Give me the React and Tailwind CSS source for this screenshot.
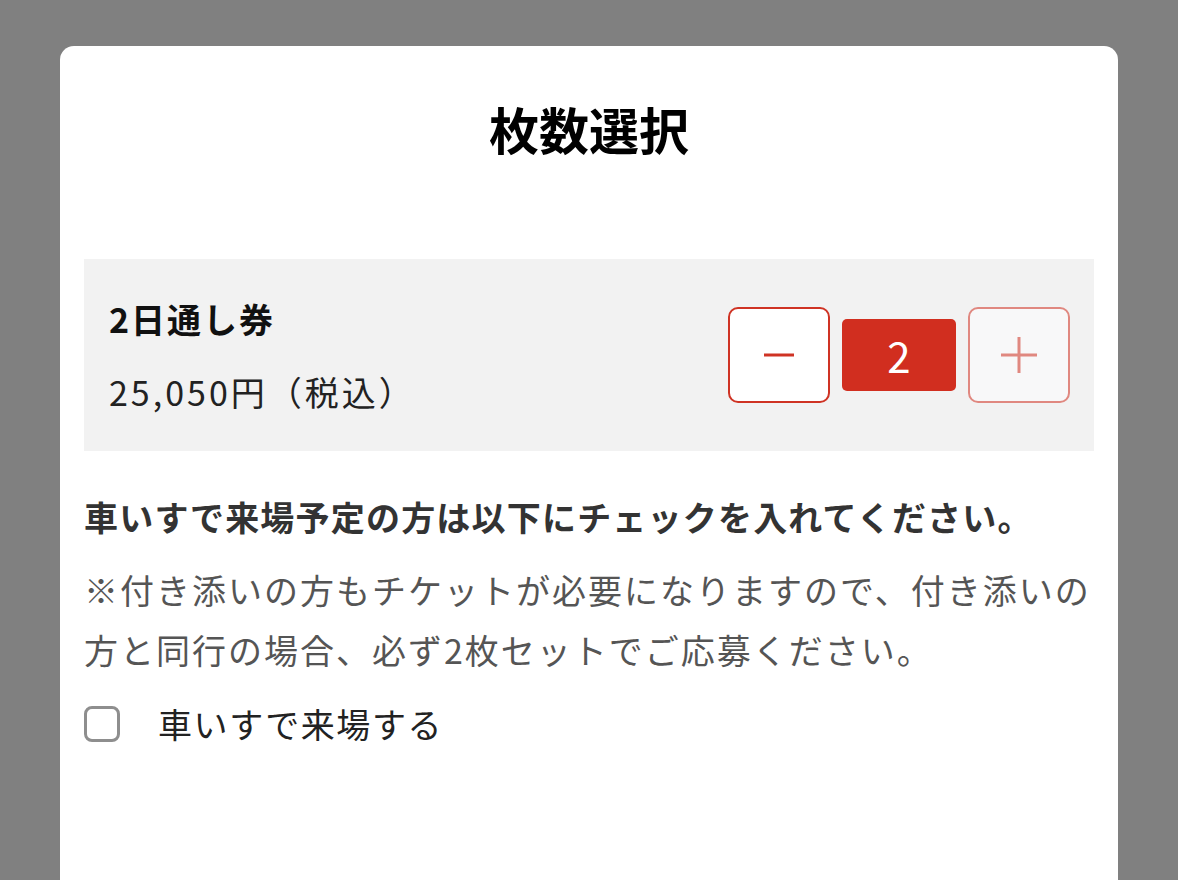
export default function App() {
  return (
    <div
      className="h-[880px] overflow-hidden bg-[#808080] pt-[46px]"
      style={{ fontFamily: '"Noto Sans CJK JP", "Noto Sans", sans-serif' }}
    >
      <div className="mx-[60px] h-[900px] rounded-[14px] bg-white px-6 pt-[45px]">
        <h1 className="text-center text-[50px] font-bold leading-[75px] text-black">枚数選択</h1>

        <div className="mt-[93px] flex h-[192px] items-center justify-between bg-[#f2f2f2] pl-[25px] pr-6">
          <div className="flex flex-col gap-[22px]">
            <p className="text-[34px] font-bold leading-[51px] tracking-[2px] text-[#111]">2日通し券</p>
            <p className="text-[34px] leading-[51px] tracking-[3px] text-[#222]">25,050円（税込）</p>
          </div>
          <div className="flex items-center gap-3">
            <button className="flex h-24 w-[102px] items-center justify-center rounded-[10px] border-2 border-[#cf3324] bg-white">
              <svg width="34" height="34" viewBox="0 0 34 34">
                <line x1="2" y1="17" x2="32" y2="17" stroke="#cf3324" strokeWidth="3" />
              </svg>
            </button>
            <div className="flex h-[72px] w-[114px] items-center justify-center rounded-[5px] bg-[#d12e1f] text-[42px] leading-none text-white">
              2
            </div>
            <button className="flex h-24 w-[102px] items-center justify-center rounded-[10px] border-2 border-[#e08880] bg-[#f8f8f9]">
              <svg width="40" height="40" viewBox="0 0 40 40">
                <line x1="2" y1="20" x2="38" y2="20" stroke="#e08880" strokeWidth="3" />
                <line x1="20" y1="2" x2="20" y2="38" stroke="#e08880" strokeWidth="3" />
              </svg>
            </button>
          </div>
        </div>

        <p className="mt-10 text-[34px] font-bold leading-[51px] tracking-[1.2px] text-[#333]">
          車いすで来場予定の方は以下にチェックを入れてください。
        </p>
        <p className="mt-[18px] text-[34px] leading-[60px] tracking-[2px] text-[#555]">
          ※付き添いの方もチケットが必要になりますので、付き添いの方と同行の場合、必ず2枚セットでご応募ください。
        </p>

        <label className="mt-[26px] flex items-center gap-[38px]">
          <span className="h-9 w-9 rounded-[8px] border-[3px] border-[#8e8e8e] bg-white" />
          <span className="text-[34px] leading-9 tracking-[1.6px] text-[#222]">車いすで来場する</span>
        </label>
      </div>
    </div>
  );
}
